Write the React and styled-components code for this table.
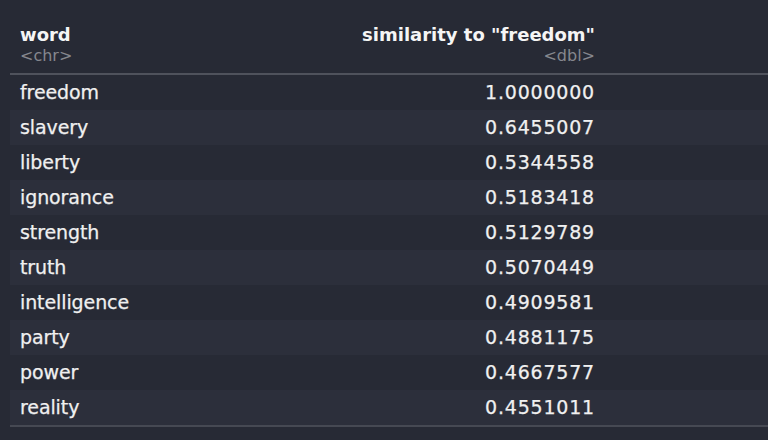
import styled, { createGlobalStyle } from 'styled-components';

const GlobalStyle = createGlobalStyle`
  html, body {
    margin: 0;
    padding: 0;
    background: #272a35;
  }
  body {
    width: 768px;
    height: 440px;
    overflow: hidden;
    font-family: "DejaVu Sans", "Liberation Sans", sans-serif;
    color: #f0f0f0;
  }
`;

const Wrapper = styled.div`
  padding-left: 10px;
`;

const Table = styled.div`
  display: grid;
  grid-template-columns: 170px 425px 1fr;
`;

const HeadCell = styled.div`
  padding: 24px 10px 7px;
  text-align: ${({ $right }) => ($right ? 'right' : 'left')};
  border-bottom: 2px solid #4f525c;
`;

const HeadTitle = styled.div`
  font-size: 18px;
  font-weight: bold;
  line-height: 21px;
  color: #f5f5f5;
`;

const HeadType = styled.div`
  font-size: 16px;
  line-height: 21px;
  color: #85878e;
`;

const Row = styled.div`
  display: contents;
`;

const Cell = styled.div`
  height: 35px;
  line-height: 35px;
  padding: 0 10px;
  font-size: 19px;
  white-space: nowrap;
  -webkit-text-stroke: 0.25px currentColor;
  background: ${({ $odd }) => ($odd ? '#2c2f3b' : 'transparent')};
  text-align: ${({ $right }) => ($right ? 'right' : 'left')};
  letter-spacing: ${({ $right }) => ($right ? '0.8px' : '-0.1px')};
  border-bottom: ${({ $last }) => ($last ? '2px solid #464953' : 'none')};
`;

const rows = [
  ['freedom', '1.0000000'],
  ['slavery', '0.6455007'],
  ['liberty', '0.5344558'],
  ['ignorance', '0.5183418'],
  ['strength', '0.5129789'],
  ['truth', '0.5070449'],
  ['intelligence', '0.4909581'],
  ['party', '0.4881175'],
  ['power', '0.4667577'],
  ['reality', '0.4551011'],
];

export default function App() {
  return (
    <>
      <GlobalStyle />
      <Wrapper>
        <Table>
          <HeadCell>
            <HeadTitle>word</HeadTitle>
            <HeadType>&lt;chr&gt;</HeadType>
          </HeadCell>
          <HeadCell $right>
            <HeadTitle>similarity to "freedom"</HeadTitle>
            <HeadType>&lt;dbl&gt;</HeadType>
          </HeadCell>
          <HeadCell />
          {rows.map(([word, value], i) => {
            const odd = i % 2 === 1;
            const last = i === rows.length - 1;
            return (
              <Row key={word}>
                <Cell $odd={odd} $last={last}>{word}</Cell>
                <Cell $odd={odd} $last={last} $right>{value}</Cell>
                <Cell $odd={odd} $last={last} />
              </Row>
            );
          })}
        </Table>
      </Wrapper>
    </>
  );
}
